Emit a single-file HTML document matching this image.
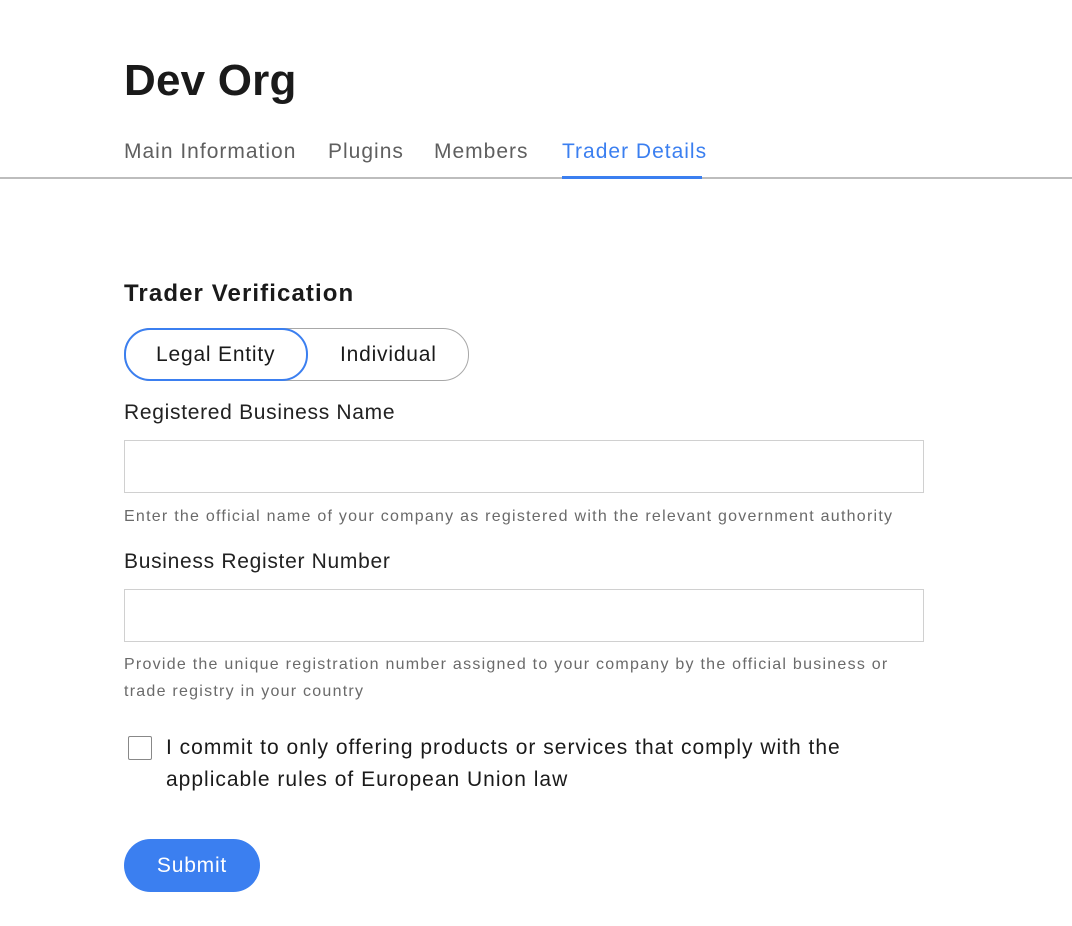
<!DOCTYPE html>
<html><head><style>
body{margin:0;width:1072px;height:926px;background:#fff;font-family:"Liberation Sans",sans-serif;color:#1a1a1a;position:relative;overflow:hidden}
.a{position:absolute;white-space:nowrap}
.tab{font-size:21px;letter-spacing:1px;color:#5f5f5f;top:140px}
.lbl{font-size:21px;letter-spacing:0.7px;left:124px;color:#222}
.help{font-size:16px;letter-spacing:1.25px;color:#6a6a6a;left:124px;line-height:27px}
.inp{position:absolute;left:124px;width:798px;height:51px;border:1px solid #d0d0d0}
.tg{font-size:21px;letter-spacing:0.8px;top:343px}
</style></head><body>
<div class="a" style="left:124px;top:56px;font-size:44px;font-weight:bold;letter-spacing:0.2px">Dev Org</div>
<div class="a tab" style="left:124px">Main Information</div>
<div class="a tab" style="left:328px">Plugins</div>
<div class="a tab" style="left:434px">Members</div>
<div class="a tab" style="left:562px;color:#3b7ff0">Trader Details</div>
<div class="a" style="left:0;top:177px;width:1072px;height:2px;background:#bdbdbd"></div>
<div class="a" style="left:562px;top:176px;width:140px;height:3px;background:#3b7ff0"></div>
<div class="a" style="left:124px;top:280px;font-size:24px;font-weight:bold;letter-spacing:1.1px">Trader Verification</div>
<div class="a" style="left:124px;top:328px;width:343px;height:51px;border:1px solid #a8a8a8;border-radius:26px"></div>
<div class="a" style="left:124px;top:328px;width:180px;height:49px;border:2px solid #3b7ff0;border-radius:26px;background:#fff"></div>
<div class="a tg" style="left:156px">Legal Entity</div>
<div class="a tg" style="left:340px">Individual</div>
<div class="a lbl" style="top:401px">Registered Business Name</div>
<div class="inp" style="top:440px"></div>
<div class="a help" style="top:503px">Enter the official name of your company as registered with the relevant government authority</div>
<div class="a lbl" style="top:550px">Business Register Number</div>
<div class="inp" style="top:589px"></div>
<div class="a help" style="top:651px">Provide the unique registration number assigned to your company by the official business or<br>trade registry in your country</div>
<div class="a" style="left:128px;top:736px;width:22px;height:22px;border:1px solid #888;border-radius:2px"></div>
<div class="a" style="left:166px;top:732px;font-size:21px;letter-spacing:1px;line-height:32px">I commit to only offering products or services that comply with the<br>applicable rules of European Union law</div>
<div class="a" style="left:124px;top:839px;width:136px;height:53px;border-radius:27px;background:#3b7ff0;color:#fff;font-size:21px;letter-spacing:0.8px;line-height:53px;text-align:center">Submit</div>
</body></html>
